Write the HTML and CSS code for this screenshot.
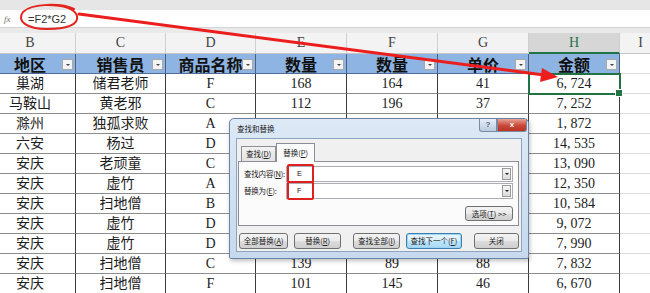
FILE: index.html
```html
<!DOCTYPE html>
<html lang="zh-CN">
<head>
    <meta charset="UTF-8">
    <meta name="viewport" content="width=device-width, initial-scale=1.0">
    <title>查找和替换</title>
    <link rel="stylesheet" href="styles.css">
</head>
<body>
<div class="app">
    <div class="ribbon-edge"></div>
    <div class="formula-bar">
        <span class="fx">fx</span>
        <span class="formula">=F2*G2</span>
    </div>
    <div class="bar-gap"></div>

    <div class="sheet">
        <div class="grid">
            <div class="row col-head">
                <div class="c">B</div><div class="c">C</div><div class="c">D</div><div class="c">E</div>
                <div class="c">F</div><div class="c">G</div><div class="c on">H</div><div class="c">I</div>
            </div>
            <div class="row head">
                <div class="c">地区<span class="fb"></span></div>
                <div class="c">销售员<span class="fb"></span></div>
                <div class="c">商品名称<span class="fb"></span></div>
                <div class="c">数量<span class="fb"></span></div>
                <div class="c">数量<span class="fb"></span></div>
                <div class="c">单价<span class="fb"></span></div>
                <div class="c">金额<span class="fb"></span></div>
                <div class="c i"></div>
            </div>
            <div class="row">
                <div class="c">巢湖</div><div class="c">储君老师</div><div class="c">F</div><div class="c">168</div>
                <div class="c">164</div><div class="c">41</div><div class="c sel">6, 724</div><div class="c i"></div>
            </div>
            <div class="row">
                <div class="c">马鞍山</div><div class="c">黄老邪</div><div class="c">C</div><div class="c">112</div>
                <div class="c">196</div><div class="c">37</div><div class="c">7, 252</div><div class="c i"></div>
            </div>
            <!-- E to G of the next rows sit under the dialog -->
            <div class="row">
                <div class="c">滁州</div><div class="c">独孤求败</div><div class="c">A</div><div class="c"></div>
                <div class="c"></div><div class="c"></div><div class="c">1, 872</div><div class="c i"></div>
            </div>
            <div class="row">
                <div class="c">六安</div><div class="c">杨过</div><div class="c">D</div><div class="c"></div>
                <div class="c"></div><div class="c"></div><div class="c">14, 535</div><div class="c i"></div>
            </div>
            <div class="row">
                <div class="c">安庆</div><div class="c">老顽童</div><div class="c">C</div><div class="c"></div>
                <div class="c"></div><div class="c"></div><div class="c">13, 090</div><div class="c i"></div>
            </div>
            <div class="row">
                <div class="c">安庆</div><div class="c">虚竹</div><div class="c">A</div><div class="c"></div>
                <div class="c"></div><div class="c"></div><div class="c">12, 350</div><div class="c i"></div>
            </div>
            <div class="row">
                <div class="c">安庆</div><div class="c">扫地僧</div><div class="c">B</div><div class="c"></div>
                <div class="c"></div><div class="c"></div><div class="c">10, 584</div><div class="c i"></div>
            </div>
            <div class="row">
                <div class="c">安庆</div><div class="c">虚竹</div><div class="c">D</div><div class="c"></div>
                <div class="c"></div><div class="c"></div><div class="c">9, 072</div><div class="c i"></div>
            </div>
            <div class="row">
                <div class="c">安庆</div><div class="c">虚竹</div><div class="c">D</div><div class="c"></div>
                <div class="c"></div><div class="c"></div><div class="c">7, 990</div><div class="c i"></div>
            </div>
            <div class="row">
                <div class="c">安庆</div><div class="c">扫地僧</div><div class="c">C</div><div class="c">139</div>
                <div class="c">89</div><div class="c">88</div><div class="c">7, 832</div><div class="c i"></div>
            </div>
            <div class="row">
                <div class="c">安庆</div><div class="c">扫地僧</div><div class="c">F</div><div class="c">101</div>
                <div class="c">145</div><div class="c">46</div><div class="c">6, 670</div><div class="c i"></div>
            </div>
        </div>
    </div>

    <!-- red annotation: circle round the formula, arrow to the result -->
    <svg class="marks" width="650" height="293" viewBox="0 0 650 293">
        <path d="M74 9 C62 3 32 3 23 12 C16 21 27 29 47 29 C66 29 79 25 77 16 C75 9 64 5 48 5" fill="none" stroke="#e3241d" stroke-width="2" stroke-linecap="round"/>
        <line x1="79" y1="14" x2="544" y2="75" stroke="#ec1d1d" stroke-width="3" stroke-linecap="round"/>
        <polygon points="558,77 540,82 542,68" fill="#ec1d1d"/>
    </svg>

    <div class="dialog">
        <div class="dlg-title">
            <span>查找和替换</span>
            <div class="dlg-ctrls">
                <span class="help">?</span>
                <span class="close">x</span>
            </div>
        </div>
        <div class="dlg-body">
            <div class="tabs">
                <span class="tab">查找(<u>D</u>)</span>
                <span class="tab active">替换(<u>P</u>)</span>
            </div>
            <div class="panel">
                <div class="field">
                    <label>查找内容(<u>N</u>):</label>
                    <div class="combo"><span class="mark">E</span><span class="drop"></span></div>
                </div>
                <div class="field">
                    <label>替换为(<u>E</u>):</label>
                    <div class="combo"><span class="mark">F</span><span class="drop"></span></div>
                </div>
                <div class="opt-row">
                    <button class="btn opt">选项(<u>T</u>) &gt;&gt;</button>
                </div>
            </div>
            <div class="actions">
                <button class="btn w50">全部替换(<u>A</u>)</button>
                <button class="btn w47">替换(<u>R</u>)</button>
                <button class="btn w48 apart">查找全部(<u>I</u>)</button>
                <button class="btn w56 default">查找下一个(<u>F</u>)</button>
                <button class="btn w46 apart">关闭</button>
            </div>
        </div>
    </div>
</div>
</body>
</html>
```

FILE: styles.css
```css
* { box-sizing: border-box; margin: 0; padding: 0; }
body {
    font-family: "Liberation Serif", "Noto Sans CJK SC", serif;
    background: #fff;
    overflow: hidden;
}
.app {
    position: relative;
    width: 650px;
    height: 293px;
    overflow: hidden;
}

/* top of the window */
.ribbon-edge { height: 10px; background: #e6e6e6; }
.formula-bar {
    height: 17px;
    display: flex;
    align-items: center;
    background: #fff;
}
.fx {
    width: 20px;
    padding-left: 4px;
    font: italic 9px "Liberation Serif", serif;
    color: #6f6f6f;
}
.formula {
    padding-left: 8px;
    font: 11px "Liberation Sans", "Noto Sans", sans-serif;
    color: #333;
}
.bar-gap {
    height: 6px;
    background: #e9e9e9;
    border-top: 1px solid #d4d4d4;
}

/* sheet */
.sheet { overflow: hidden; }
.grid { width: 677px; margin-left: -15px; }
.row {
    display: grid;
    grid-template-columns: 91px 90px 90px 91px 91px 91px 91px 42px;
    height: 20px;
}
.c {
    position: relative;
    display: flex;
    align-items: center;
    justify-content: center;
    border-right: 1px solid #3d3d3d;
    border-bottom: 1px solid #8d8d8d;
    font-size: 14px;
    line-height: 1.1;
    color: #1c1c1c;
    white-space: nowrap;
}
.c.i { border-right: none; border-bottom-color: #dadada; }

.col-head { height: 21px; background: #f3f3f3; }
.col-head .c {
    border-right-color: #cfcfcf;
    border-bottom-color: #c6c6c6;
    font-size: 14px;
    color: #444;
}
.col-head .c.on {
    background: #d6d6d6;
    border-bottom: 2px solid #217346;
    color: #217346;
}

.head .c {
    background: #8db4e2;
    border-right-color: #4f5f78;
    border-bottom-color: #4f6d98;
    font: bold 16px/1 "Noto Sans CJK SC", sans-serif;
    color: #111;
}
.head .c.i { background: #fff; border-bottom-color: #dadada; }
.fb {
    position: absolute;
    right: 2px;
    top: 5px;
    width: 11px;
    height: 11px;
    background: #f4f4f4;
    border: 1px solid #a9a9a9;
}
.fb::after {
    content: "";
    position: absolute;
    left: 3px;
    top: 4px;
    border-left: 2px solid transparent;
    border-right: 2px solid transparent;
    border-top: 2px solid #444;
}
.sel { outline: 2px solid #217346; outline-offset: -1px; z-index: 1; }
.sel::after {
    content: "";
    position: absolute;
    right: -4px;
    bottom: -4px;
    width: 6px;
    height: 6px;
    background: #217346;
    border: 1px solid #fff;
}

.marks { position: absolute; left: 0; top: 0; pointer-events: none; z-index: 2; }

/* find & replace dialog */
.dialog {
    position: absolute;
    left: 229px;
    top: 118px;
    width: 300px;
    height: 141px;
    z-index: 3;
    border: 1px solid #6c84a3;
    border-radius: 5px 5px 2px 2px;
    background: linear-gradient(#dde9f6, #c6d9ee);
    box-shadow: 1px 2px 4px rgba(0, 0, 0, 0.25);
    font: 7.5px/1 "Noto Sans CJK SC", sans-serif;
    color: #222;
}
.dlg-title {
    height: 19px;
    display: flex;
    align-items: center;
    justify-content: space-between;
    padding-left: 7px;
}
.dlg-ctrls { display: flex; align-self: flex-start; margin-right: 1px; }
.help, .close {
    height: 13px;
    display: flex;
    align-items: center;
    justify-content: center;
    border: 1px solid #7a8aa0;
    border-top: none;
    color: #fff;
    font: bold 8px/1 "Liberation Sans", sans-serif;
}
.help {
    width: 18px;
    background: linear-gradient(#e6eef8, #bccbe0);
    color: #51647d;
    border-radius: 0 0 0 3px;
}
.close {
    width: 30px;
    background: linear-gradient(#e8a295, #c9483a 55%, #b83424);
    border-radius: 0 0 3px 0;
}
.dlg-body {
    margin: 0 6px;
    height: 114px;
    padding: 4px 2px 0 1px;
    background: #f0f0f0;
    border: 1px solid #8ea3bd;
}
.tabs { display: flex; align-items: flex-end; height: 18px; padding-left: 3px; }
.tab {
    height: 15px;
    padding: 0 4px;
    display: flex;
    align-items: center;
    border: 1px solid #8c8e94;
    border-bottom: none;
    background: linear-gradient(#f2f2f2, #e3e3e3);
}
.tab.active {
    height: 19px;
    margin-bottom: -1px;
    padding: 0 6px;
    background: #fbfbfb;
    position: relative;
}
.panel {
    height: 65px;
    padding: 4px 5px 6px 5px;
    background: #fbfbfb;
    border: 1px solid #8c8e94;
}
.field { display: flex; align-items: center; height: 16px; margin-bottom: 1px; }
.field label { flex: none; width: 42px; white-space: nowrap; letter-spacing: -0.2px; }
.combo {
    flex: 1;
    height: 16px;
    display: flex;
    align-items: flex-start;
    justify-content: space-between;
    background: #fff;
    border: 1px solid #abadb3;
}
.mark {
    width: 27px;
    height: 19px;
    margin-top: -3px;
    padding-left: 8px;
    display: flex;
    align-items: center;
    border: 2px solid #e01f1f;
    border-radius: 2px;
    font-family: "Liberation Sans", sans-serif;
}
.drop {
    position: relative;
    width: 9px;
    height: 12px;
    margin: 1px 1px 0 0;
    border: 1px solid #9a9a9a;
    background: linear-gradient(#f6f6f6, #dcdcdc);
}
.drop::after {
    content: "";
    position: absolute;
    left: 2px;
    top: 4px;
    border-left: 2px solid transparent;
    border-right: 2px solid transparent;
    border-top: 2px solid #222;
}
.opt-row { display: flex; justify-content: flex-end; margin-top: 7px; }
.btn {
    height: 15px;
    display: flex;
    align-items: center;
    justify-content: center;
    overflow: hidden;
    border: 1px solid #707070;
    border-radius: 3px;
    background: linear-gradient(#f3f3f3, #ebebeb 50%, #dddddd 50%, #cfcfcf);
    font: 7.5px/1 "Noto Sans CJK SC", sans-serif;
    color: #222;
    white-space: nowrap;
}
.btn.opt { width: 48px; }
.actions { display: flex; gap: 6px; margin-top: 7px; padding-left: 1px; }
.btn.w50 { width: 50px; height: 16px; }
.btn.w47 { width: 47px; height: 16px; }
.btn.w48 { width: 48px; height: 16px; }
.btn.w56 { width: 56px; height: 16px; }
.btn.w46 { width: 46px; height: 16px; }
.btn.apart { margin-left: 6px; }
.btn.default {
    border-color: #3c7fb1;
    background: linear-gradient(#eaf6fd, #d9f0fc 50%, #bee6fd 50%, #a7d9f5);
    box-shadow: inset 0 0 0 1px #9fd5f3;
}
```
